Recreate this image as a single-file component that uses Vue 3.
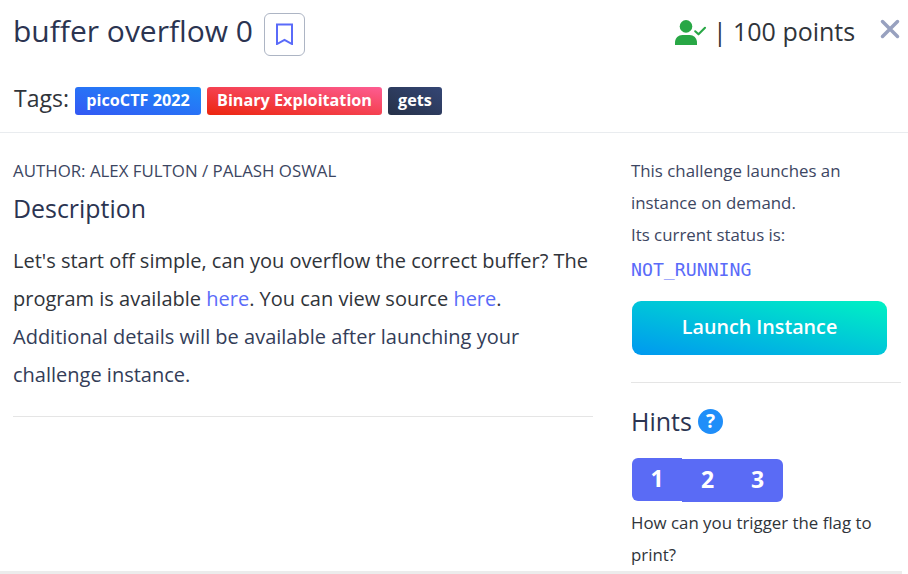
<script setup>
const tags = [
  { label: 'picoCTF 2022', kind: 'event' },
  { label: 'Binary Exploitation', kind: 'category' },
  { label: 'gets', kind: 'topic' },
]
const hints = [1, 2, 3]
</script>

<template>
  <div class="modal">
    <header class="head">
      <div class="title-row">
        <h1 class="title">buffer overflow 0</h1>
        <button class="bookmark" aria-label="Bookmark">
          <svg width="19" height="24" viewBox="0 0 19 24"><path d="M2 3.500H17V23L9.500 18.800L2 23Z" fill="none" stroke="#5a6bf9" stroke-width="2" /></svg>
        </button>
        <div class="score">
          <svg class="user" width="32" height="26" viewBox="0 0 32 26">
            <circle cx="11" cy="6.400" r="6.300" fill="#28a745" />
            <path d="M0 25V22.8C0 18 3.400 15.100 7.400 15.100H14.600C18.600 15.100 22 18 22 22.800V25Z" fill="#28a745" />
            <path d="M20.200 11.300L23.500 14.300L30 7.800" fill="none" stroke="#28a745" stroke-width="2.100" stroke-linecap="round" stroke-linejoin="round" />
          </svg>
          <span class="bar">|</span>
          <span class="points">100 points</span>
        </div>
        <button class="close" aria-label="Close">
          <svg width="20" height="20" viewBox="0 0 20 20"><path d="M2.500 2.500L17.500 17.500M17.500 2.500L2.500 17.500" stroke="#98a1bf" stroke-width="3.500" stroke-linecap="round" /></svg>
        </button>
      </div>
      <div class="tags">
        <span class="tags-label">Tags:</span>
        <span v-for="tag in tags" :key="tag.label" class="tag" :class="tag.kind"><span>{{ tag.label }}</span></span>
      </div>
    </header>
    <main class="body">
      <section class="left">
        <p class="author">AUTHOR: ALEX FULTON / PALASH OSWAL</p>
        <h2 class="heading">Description</h2>
        <p class="text"><span>Let's start off simple, can you overflow the correct buffer? The</span><br><span>program is available <a>here</a>. You can view source <a>here</a>.</span></p>
        <p class="text navy">Additional details will be available after launching your<br>challenge instance.</p>
      </section>
      <aside class="right">
        <div class="instance">
          <p class="small">This challenge launches an<br>instance on demand.<br>Its current status is:</p>
          <code class="status">NOT_RUNNING</code>
          <button class="launch">Launch Instance</button>
        </div>
        <div class="hints-head">
          <h2 class="hints-title">Hints</h2>
          <span class="help">?</span>
        </div>
        <div class="hints">
          <button v-for="n in hints" :key="n" class="hint" :class="{ active: n === 1 }">{{ n }}</button>
        </div>
        <p class="small dark">How can you trigger the flag to<br>print?</p>
      </aside>
    </main>
    <div class="foot"></div>
  </div>
</template>

<style>
body { margin: 0; background: #fff; overflow: hidden; }
</style>

<style scoped>
* { box-sizing: border-box; }
.modal { width: 908px; height: 574px; overflow: hidden; display: flex; flex-direction: column; font-family: "Open Sans", "Noto Sans", sans-serif; font-weight: 400; color: #30343a; background: #fff; white-space: nowrap; }
h1, h2, p { margin: 0; font-weight: 400; }
button { border: 0; padding: 0; margin: 0; font-family: inherit; background: none; }
svg { display: block; }
.head { height: 133px; border-bottom: 1px solid #e9ecef; }
.title-row { display: flex; height: 86px; padding: 13px 8px 0 13px; align-items: flex-start; }
.title { width: 251px; font-size: 30px; line-height: 36px; color: #2b3451; }
.bookmark { width: 41px; height: 43px; border: 1px solid #adb5c4; border-radius: 6px; display: flex; align-items: flex-start; justify-content: center; padding-top: 7px; }
.score { display: flex; margin-left: 370px; }
.user { margin-top: 7px; }
.bar, .points { font-size: 25px; line-height: 37px; }
.bar { margin-left: 6px; width: 20px; }
.points { width: 147px; }
.close { margin-top: 6px; }
.tags { display: flex; padding-left: 14px; height: 29px; align-items: flex-end; }
.tags-label { width: 61px; font-size: 23px; line-height: 24px; height: 29px; color: #30343a; }
.tag { height: 28px; margin-right: 6px; border-radius: 3px; color: #fff; font-weight: 700; font-size: 16.2px; line-height: 26px; display: flex; justify-content: center; }
.event { width: 126px; background: linear-gradient(to top right, #3358f4, #1d8cf8); }
.category { width: 175px; background: linear-gradient(to top right, #ec250d, #fd5d93); }
.topic { width: 54px; background: linear-gradient(to top right, #263148, #344675); }
.body { display: flex; justify-content: space-between; height: 438px; padding: 22px 7px 0 13px; }
.left { width: 580px; height: 262px; border-bottom: 1px solid #e5e5e5; }
.author { font-size: 16.85px; line-height: 32px; color: #3c4662; }
.heading { font-size: 24.9px; line-height: 32px; margin: 5px 0 18px; color: #2b3451; }
.text { font-size: 20px; line-height: 38px; }
.navy { color: #333d58; }
a { color: #5a6bf9; }
.right { width: 270px; }
.small { font-size: 16.85px; line-height: 32px; color: #3c4662; }
.dark { color: #30343a; }
.instance { height: 228px; border-bottom: 1px solid #e5e5e5; }
.status { display: block; height: 50px; padding-top: 3px; font: 18.2px/32px "DejaVu Sans Mono", monospace; color: #5a6bf9; }
.launch { display: block; width: 255px; height: 54px; margin-left: 1px; border-radius: 9px; color: #fff; font-size: 19.7px; line-height: 52px; font-weight: 600; padding-bottom: 2px; background: linear-gradient(to top right, #0098f0, #00f2c3); }
.hints-head { display: flex; height: 75px; padding-top: 23px; }
.hints-title { width: 67px; font-size: 25px; line-height: 31px; color: #2b3451; }
.help { width: 25px; height: 25px; margin-top: 3px; border-radius: 50%; background: #1f8ef9; color: #fff; text-align: center; font-size: 19px; line-height: 25px; font-weight: 700; }
.hints { display: flex; margin-left: 1px; height: 49px; }
.hint { width: 50px; height: 43px; margin-top: 1px; background: #5a6bf5; color: #fff; font-weight: 700; font-size: 23px; line-height: 41px; padding-bottom: 2px; }
.hint.active { margin-top: 0; border-radius: 6px 0 0 6px; }
.hint:nth-child(2) { padding-left: 1px; }
.hint:last-child { width: 51px; border-radius: 0 6px 6px 0; }
.foot { width: 902px; height: 3px; background: #ececec; }
</style>
